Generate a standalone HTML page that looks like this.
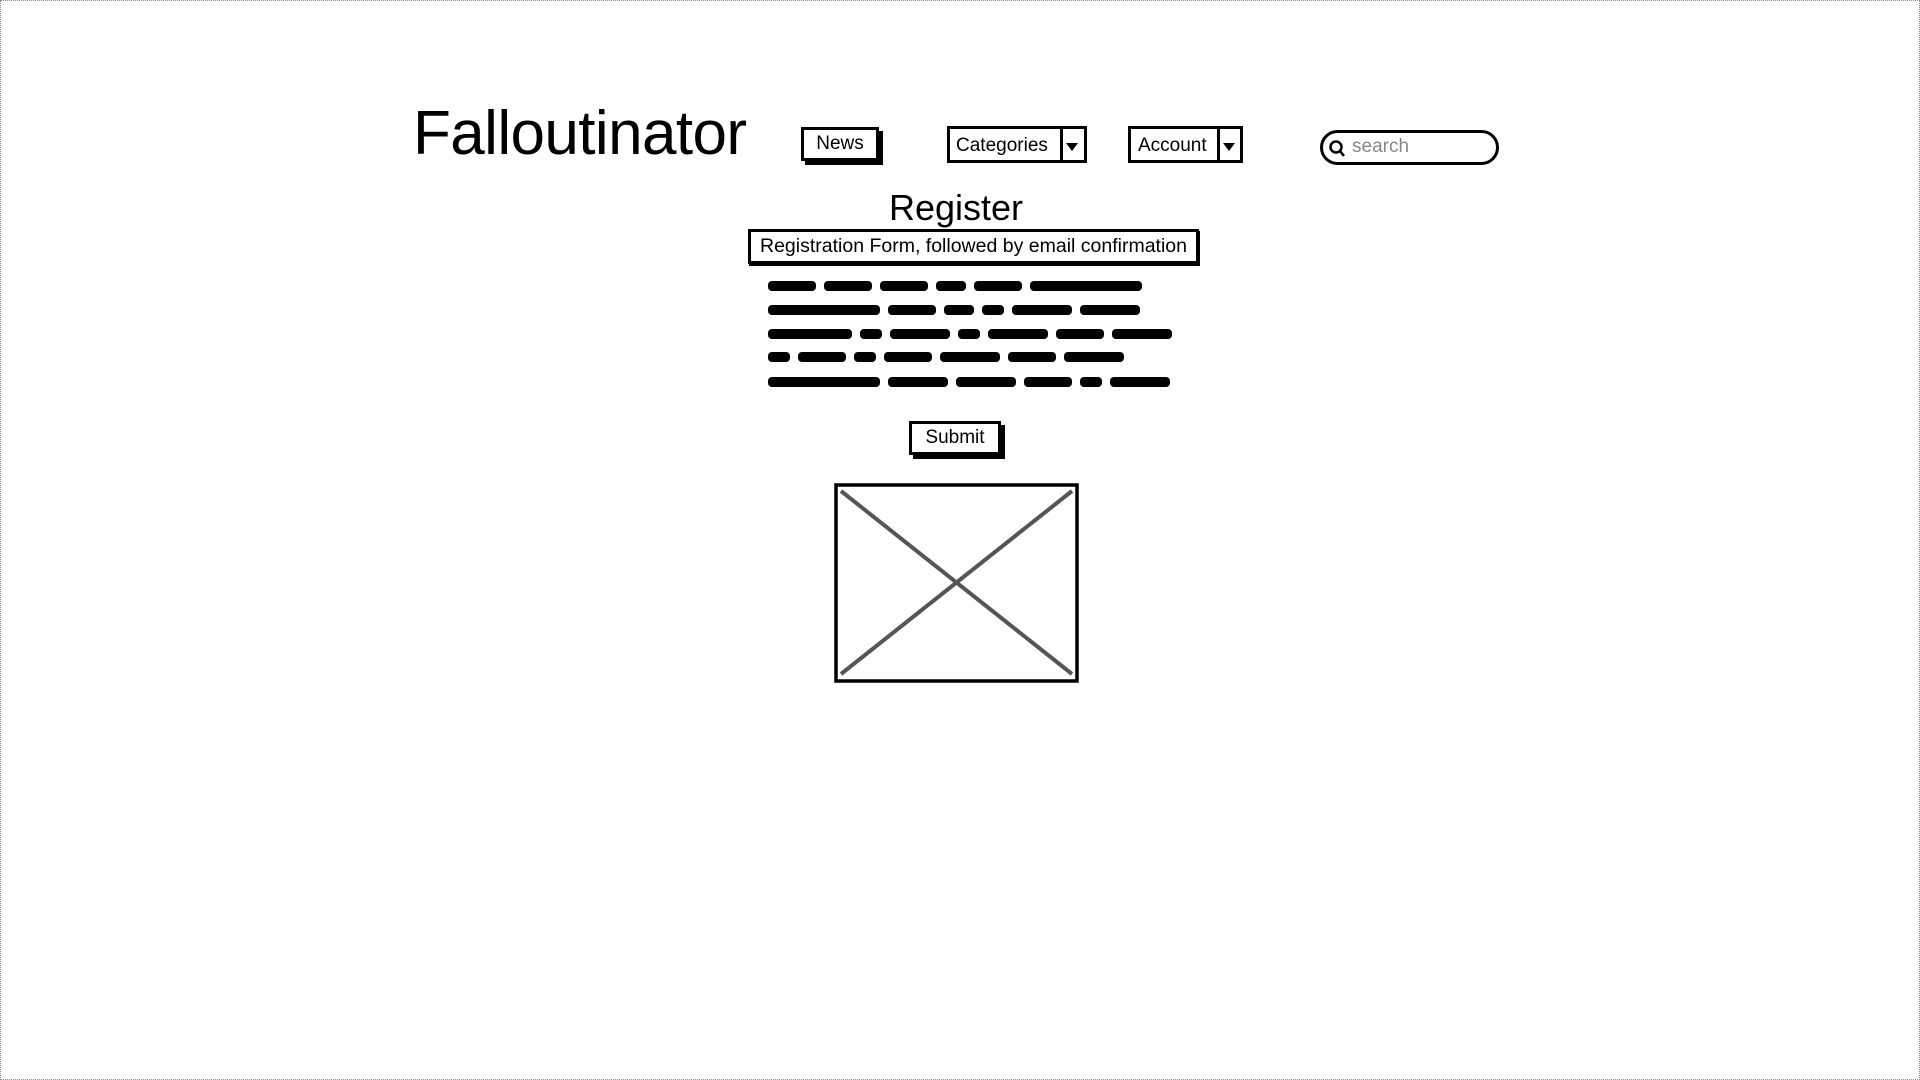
<!DOCTYPE html>
<html><head><meta charset="utf-8"><style>
body{margin:0;width:1920px;height:1080px;position:relative;background:#fff;font-family:"Liberation Sans",sans-serif;overflow:hidden}
.frame{position:absolute;left:0;top:0;width:1918px;height:1078px;border:1px dotted #888}
.a{position:absolute}
.btn{position:absolute;border:3px solid #000;background:#fff;box-shadow:4px 4px 0 #000;box-sizing:border-box;font-size:19px;text-align:center}
.dd{position:absolute;border:3px solid #000;box-sizing:border-box;font-size:19px;background:#fff}
.dd .sep{position:absolute;top:0;bottom:0;border-left:3px solid #000}
.tri{position:absolute;width:0;height:0;border-left:6px solid transparent;border-right:6px solid transparent;border-top:8px solid #000}
.w{position:absolute;height:10px;background:#000;border-radius:4px}
</style></head><body>
<div class="frame"></div>
<div class="a" style="left:413px;top:98px;font-size:62px;letter-spacing:-0.6px">Falloutinator</div>
<div class="btn" style="left:801px;top:127px;width:78px;height:34px;line-height:28px">News</div>
<div class="dd" style="left:947px;top:126px;width:140px;height:37px"><span class="a" style="left:6px;top:6px">Categories</span><div class="sep" style="left:110px"></div><div class="tri" style="left:116px;top:14px"></div></div>
<div class="dd" style="left:1128px;top:126px;width:115px;height:37px"><span class="a" style="left:7px;top:6px">Account</span><div class="sep" style="left:86px"></div><div class="tri" style="left:92px;top:14px"></div></div>
<div class="a" style="left:1320px;top:130px;width:179px;height:35px;border:3px solid #000;border-radius:18px;box-sizing:border-box"></div>
<svg class="a" style="left:1328px;top:139px" width="18" height="20"><circle cx="8" cy="8" r="5.5" fill="none" stroke="#000" stroke-width="2.5"/><line x1="12" y1="12" x2="16" y2="17" stroke="#000" stroke-width="2.5"/></svg>
<div class="a" style="left:1352px;top:136px;font-size:19px;color:#888">search</div>
<div class="a" style="left:856px;top:187px;width:200px;text-align:center;font-size:36px">Register</div>
<div class="a" style="left:748px;top:229px;width:451px;height:35px;border:3px solid #000;box-sizing:border-box;font-size:19.5px;line-height:29px;text-align:center;box-shadow:1px 2px 0 #000">Registration Form, followed by email confirmation</div>
<div id="s"></div>
<div class="btn" style="left:909px;top:421px;width:92px;height:34px;line-height:28px">Submit</div>
<svg class="a" style="left:834px;top:483px" width="246" height="201"><rect x="2" y="2" width="241" height="196" fill="#fff" stroke="#000" stroke-width="3.5"/><line x1="7" y1="8" x2="238" y2="191" stroke="#555" stroke-width="4"/><line x1="238" y1="8" x2="7" y2="191" stroke="#555" stroke-width="4"/></svg>
<script>
var lines=[[281,[48,48,48,30,48,112]],[305,[112,48,30,22,60,60]],[329,[84,22,60,22,60,48,60]],[352,[22,48,22,48,60,48,60]],[377,[112,60,60,48,22,60]]];
var h='';lines.forEach(function(l){var x=768;l[1].forEach(function(w){h+='<div class="w" style="left:'+x+'px;top:'+l[0]+'px;width:'+w+'px"></div>';x+=w+8;});});
document.getElementById('s').innerHTML=h;
</script>
</body></html>
